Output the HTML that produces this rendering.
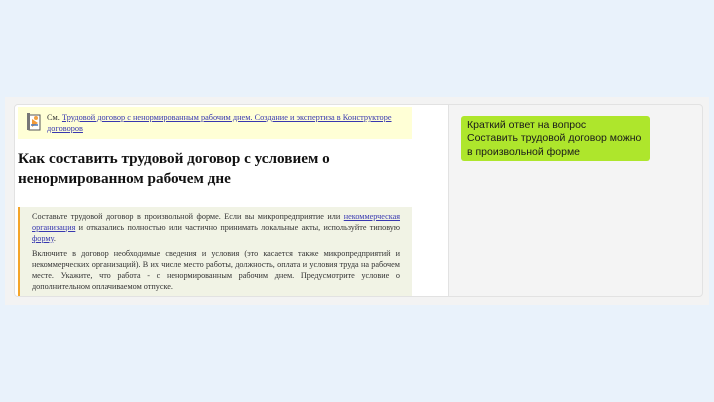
<!DOCTYPE html>
<html><head><meta charset="utf-8"><style>
*{margin:0;padding:0;box-sizing:border-box}
body{width:714px;height:402px;background:#e9f2fb;position:relative;overflow:hidden;font-family:"Liberation Serif",serif}
.band{position:absolute;left:5px;top:97px;width:704px;height:208px;background:#f3f3f3}
.card{position:absolute;left:14px;top:104px;width:689px;height:193px;border:1px solid #e2e2e2;border-radius:4px;background:#f4f4f4;overflow:hidden}
.left{position:absolute;left:0;top:0;width:434px;height:193px;background:#fff;border-right:1px solid #e2e2e2}
.see{position:absolute;left:3px;top:2px;width:394px;height:32px;background:#ffffd6;font-size:8.3px;line-height:11px;padding:5px 10px 0 29px;color:#333}
.ico{position:absolute;left:8px;top:5px}
h1{position:absolute;left:3px;top:44px;font-size:15.2px;line-height:20px;font-weight:bold;color:#111;width:400px}
.q{position:absolute;left:3px;top:102px;width:394px;height:91px;background:#f1f3e5;border-left:2px solid #f4a52a;padding:5px 12px 0 12px;font-size:8.2px;line-height:10.8px;color:#333}
.q a,.see a{color:#3838b0;text-decoration:underline}
.l{display:block;white-space:nowrap;text-align:justify;text-align-last:justify}
.e{display:block;white-space:nowrap}
.q p{margin-bottom:5px}
.green{position:absolute;left:461px;top:116px;width:189px;height:45px;background:#aee62c;border-radius:3px;font-family:"Liberation Sans",sans-serif;font-size:10.5px;line-height:13.3px;color:#1a1a1a;padding:3px 0 0 6px}
</style></head><body>
<div class="band"></div>
<div class="card">
<div class="left">
<div class="see"><svg class="ico" width="16" height="20" viewBox="0 0 16 20"><rect x="3" y="3" width="11" height="15" fill="#fff" stroke="#555"/><rect x="1" y="1" width="3" height="17" fill="#777"/><path d="M6 7l6 4-6 4z" fill="#f39a3a"/><circle cx="10" cy="6" r="2" fill="#f0a040"/><path d="M5 13h7" stroke="#4a7ac0" stroke-width="1.5"/></svg><span class="e">См. <a>Трудовой договор с ненормированным рабочим днем. Создание и экспертиза в Конструкторе</a></span><span class="e"><a>договоров</a></span></div>
<h1>Как составить трудовой договор с условием о ненормированном рабочем дне</h1>
<div class="q"><p><span class="l">Составьте трудовой договор в произвольной форме. Если вы микропредприятие или <a>некоммерческая</a></span><span class="l"><a>организация</a> и отказались полностью или частично принимать локальные акты, используйте типовую</span><span class="e"><a>форму</a>.</span></p><p><span class="l">Включите в договор необходимые сведения и условия (это касается также микропредприятий и</span><span class="l">некоммерческих организаций). В их числе место работы, должность, оплата и условия труда на рабочем</span><span class="l">месте. Укажите, что работа - с ненормированным рабочим днем. Предусмотрите условие о</span><span class="e">дополнительном оплачиваемом отпуске.</span></p></div>
</div>
</div>
<div class="green">Краткий ответ на вопрос<br>Составить трудовой договор можно<br>в произвольной форме</div>
</body></html>
